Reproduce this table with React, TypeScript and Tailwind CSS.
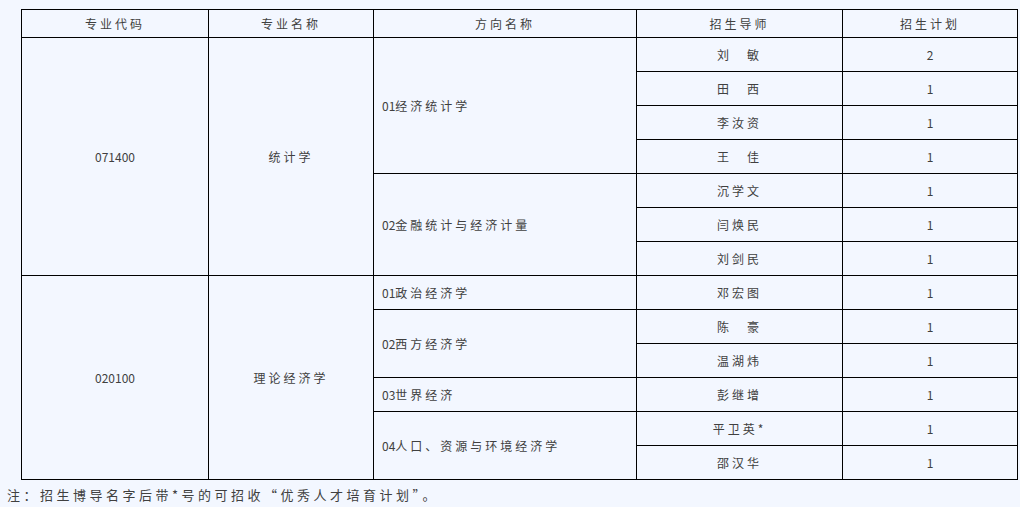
const cjk = '"Noto Sans CJK SC", "Liberation Sans", sans-serif'

type Row = {
  code?: { text: string; span: number }
  name?: { text: string; span: number }
  dir?: { num: string; text: string; span: number }
  teacher: string
  plan: string
}

const rows: Row[] = [
  {
    code: { text: "071400", span: 7 },
    name: { text: "统计学", span: 7 },
    dir: { num: "01", text: "经济统计学", span: 4 },
    teacher: "刘　敏",
    plan: "2",
  },
  { teacher: "田　西", plan: "1" },
  { teacher: "李汝资", plan: "1" },
  { teacher: "王　佳", plan: "1" },
  { dir: { num: "02", text: "金融统计与经济计量", span: 3 }, teacher: "沉学文", plan: "1" },
  { teacher: "闫焕民", plan: "1" },
  { teacher: "刘剑民", plan: "1" },
  {
    code: { text: "020100", span: 6 },
    name: { text: "理论经济学", span: 6 },
    dir: { num: "01", text: "政治经济学", span: 1 },
    teacher: "邓宏图",
    plan: "1",
  },
  { dir: { num: "02", text: "西方经济学", span: 2 }, teacher: "陈　豪", plan: "1" },
  { teacher: "温湖炜", plan: "1" },
  { dir: { num: "03", text: "世界经济", span: 1 }, teacher: "彭继增", plan: "1" },
  { dir: { num: "04", text: "人口、资源与环境经济学", span: 2 }, teacher: "平卫英*", plan: "1" },
  { teacher: "邵汉华", plan: "1" },
]

const cell = "border border-black p-0 align-middle"

export default function App() {
  return (
    <div
      className="w-[1020px] h-[507px] bg-[#f3f7ff] text-[#404040] text-[12px] overflow-hidden"
      style={{ fontFamily: cjk }}
    >
      <div className="pt-[9px] pl-[21px]">
        <table className="border-collapse table-fixed w-[996px]">
          <colgroup>
            <col className="w-[187px]" />
            <col className="w-[165px]" />
            <col className="w-[263px]" />
            <col className="w-[206px]" />
            <col className="w-[175px]" />
          </colgroup>
          <thead>
            <tr className="h-[28px]">
              {["专业代码", "专业名称", "方向名称", "招生导师", "招生计划"].map((h) => (
                <th key={h} className={`${cell} font-normal text-center tracking-[3px]`}>
                  {h}
                </th>
              ))}
            </tr>
          </thead>
          <tbody>
            {rows.map((r, i) => (
              <tr key={i} className="h-[34px]">
                {r.code && (
                  <td rowSpan={r.code.span} className={`${cell} text-center`}>
                    {r.code.text}
                  </td>
                )}
                {r.name && (
                  <td rowSpan={r.name.span} className={`${cell} text-center tracking-[3px]`}>
                    {r.name.text}
                  </td>
                )}
                {r.dir && (
                  <td rowSpan={r.dir.span} className={`${cell} pl-[8px] text-left`}>
                    <span>{r.dir.num}</span>
                    <span className="tracking-[3px]">{r.dir.text}</span>
                  </td>
                )}
                <td className={`${cell} text-center tracking-[3px]`}>{r.teacher}</td>
                <td className={`${cell} text-center`}>{r.plan}</td>
              </tr>
            ))}
          </tbody>
        </table>
      </div>
      <p className="pl-[7px] pt-[5px] text-[13px] leading-[20px] tracking-[3.5px]">
        注：招生博导名字后带*号的可招收“优秀人才培育计划”。
      </p>
    </div>
  )
}
